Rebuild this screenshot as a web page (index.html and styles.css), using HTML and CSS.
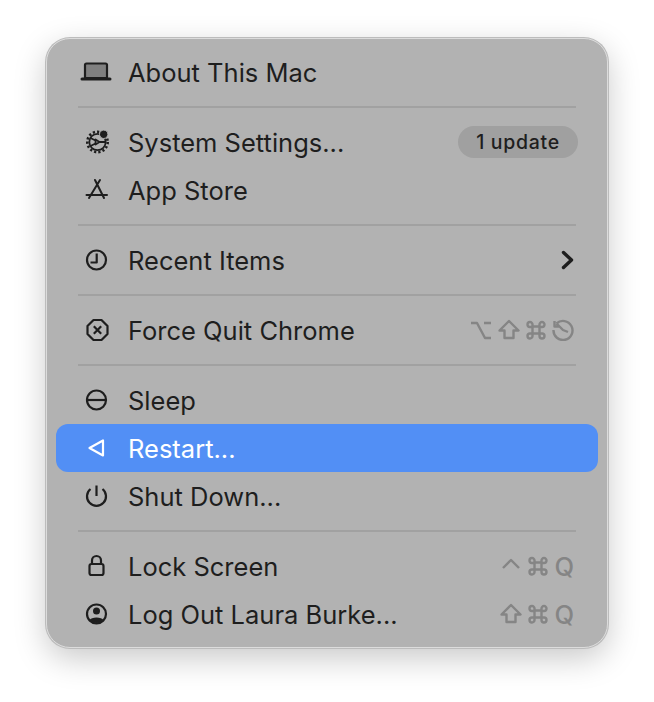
FILE: index.html
```html
<!DOCTYPE html>
<html lang="en">
  <head>
    <meta charset="UTF-8" />
    <title>Apple menu</title>
    <link rel="stylesheet" href="styles.css">
  </head>
  <body>
    <svg class="defs" width="0" height="0" aria-hidden="true">
      <symbol id="key-shift" viewBox="0 0 22 22">
        <path d="M11 2 L20.500 11.500 H15.500 V19 H6.500 V11.500 H1.500 Z" />
      </symbol>
      <symbol id="key-cmd" viewBox="0 0 20 20">
        <path d="M6.500 6.500 H13.500 V13.500 H6.500 Z M6.500 6.500 V4.500 A2.500 2.500 0 1 0 4 7 H6.500 M13.500 6.500 V4.500 A2.500 2.500 0 1 1 16 7 H13.500 M6.500 13.500 V16 A2.500 2.500 0 1 1 4 13.500 H6.500 M13.500 13.500 V16 A2.500 2.500 0 1 0 16 13.500 H13.500" />
      </symbol>
    </svg>

    <div class="menu">
      <div class="item">
        <svg class="icon" viewBox="0 0 32 32">
          <path class="laptop-lid" d="M5 22 V9 A1.500 1.500 0 0 1 6.500 7.500 H25.500 A1.500 1.500 0 0 1 27 9 V22 Z" />
          <path class="laptop-base" d="M2 23 H30" />
        </svg>
        <span class="label">About This Mac</span>
      </div>
      <hr class="sep" />

      <div class="item">
        <svg class="icon" viewBox="0 0 32 32">
          <circle class="gear-teeth" cx="17.500" cy="16" r="10.200" />
          <circle class="thin" cx="17.500" cy="16" r="8.200" />
          <path class="thin" d="M10.500 12 L15.500 14.500 M10.500 20 L15.500 17.500 M19.500 16 H25.500 M15.500 13.500 L19.500 16 L15.500 18.500 Z" />
          <circle class="gear-dot" cx="23.700" cy="8.300" r="4.200" />
        </svg>
        <span class="label">System Settings...</span>
        <span class="badge">1 update</span>
      </div>
      <div class="item">
        <svg class="icon" viewBox="0 0 32 32">
          <path class="appstore" d="M15 6 L24 24 M20 6 L9 24 M6.500 21 H27" />
        </svg>
        <span class="label">App Store</span>
      </div>
      <hr class="sep" />

      <div class="item">
        <svg class="icon" viewBox="0 0 32 32">
          <circle cx="16.500" cy="16" r="9.500" />
          <path d="M16.700 9.500 V18.500 H10.500" />
        </svg>
        <span class="label">Recent Items</span>
        <svg class="chevron" viewBox="0 0 14 20">
          <path d="M2.500 2.500 L10.500 10 L2.500 17.500" />
        </svg>
      </div>
      <hr class="sep" />

      <div class="item">
        <svg class="icon" viewBox="0 0 32 32">
          <path d="M13.500 6 H21.500 L27.500 12 V20 L21.500 26 H13.500 L7.500 20 V12 Z" />
          <path d="M13.800 12.300 L21.200 19.700 M21.200 12.300 L13.800 19.700" />
        </svg>
        <span class="label">Force Quit Chrome</span>
        <span class="keys">
          <svg class="key" viewBox="0 0 22 22"><path d="M1 4 H7 L15 19 H21 M14 4 H21" /></svg>
          <svg class="key"><use href="#key-shift" /></svg>
          <svg class="key key-cmd"><use href="#key-cmd" /></svg>
          <svg class="key" viewBox="0 0 22 22"><path d="M4.500 4.500 A9.500 9.500 0 1 1 1.500 11 M2.500 2 V7.500 H8 M4.500 4.500 L11 11 L16 13" /></svg>
        </span>
      </div>
      <hr class="sep" />

      <div class="item">
        <svg class="icon" viewBox="0 0 32 32">
          <circle cx="16.500" cy="16" r="9.500" />
          <path d="M7 16 H26" />
        </svg>
        <span class="label">Sleep</span>
      </div>
      <div class="item selected">
        <svg class="icon" viewBox="0 0 32 32">
          <path d="M9.500 16 L23 8.500 V23.500 Z" />
        </svg>
        <span class="label">Restart...</span>
      </div>
      <div class="item">
        <svg class="icon" viewBox="0 0 32 32">
          <path d="M10.500 9 A9.500 9.500 0 1 0 22.500 9 M16.500 5.500 V16" />
        </svg>
        <span class="label">Shut Down...</span>
      </div>
      <hr class="sep" />

      <div class="item">
        <svg class="icon" viewBox="0 0 32 32">
          <rect x="9.500" y="14" width="14" height="11" rx="2" />
          <path d="M12 14 V10.500 A4.500 4.500 0 0 1 21 10.500 V14" />
        </svg>
        <span class="label">Lock Screen</span>
        <span class="keys">
          <svg class="key" viewBox="0 0 22 22"><path d="M3 13 L11 5 L19 13" /></svg>
          <svg class="key key-cmd"><use href="#key-cmd" /></svg>
          <span class="key-q">Q</span>
        </span>
      </div>
      <div class="item">
        <svg class="icon" viewBox="0 0 32 32">
          <circle cx="16.500" cy="16" r="9.500" />
          <circle class="solid" cx="16.500" cy="13" r="3.500" />
          <path class="solid" d="M9.500 22 C11 18.500 22 18.500 23.500 22 C21 26 12 26 9.500 22 Z" />
        </svg>
        <span class="label">Log Out Laura Burke...</span>
        <span class="keys">
          <svg class="key"><use href="#key-shift" /></svg>
          <svg class="key key-cmd"><use href="#key-cmd" /></svg>
          <span class="key-q">Q</span>
        </span>
      </div>
    </div>
  </body>
</html>
```

FILE: styles.css
```css
:root {
  --panel-color: #b2b2b2;
  --text-color: #1e1e1e;
  --muted-color: #858585;
  --sep-color: #a1a1a1;
  --select-color: #528ff5;
  --font-family: Inter, "Liberation Sans", sans-serif;
}
* {
  box-sizing: border-box;
}
body {
  margin: 0;
  min-height: 100vh;
  padding: 38px 0 0 46px;
  background-color: #fff;
  font-family: var(--font-family);
  color: var(--text-color);
}
.defs {
  display: block;
  height: 0;
}
.menu {
  width: 562px;
  padding: 9px;
  background-color: var(--panel-color);
  border: 1px solid #dcdcdc;
  border-radius: 24px;
  box-shadow: 0 0 0 1px #bcbcbc, 0 10px 32px rgba(0, 0, 0, 0.22);
}
.sep {
  height: 2px;
  margin: 10px 22px;
  border: 0;
  background-color: var(--sep-color);
}
.item {
  display: flex;
  align-items: center;
  height: 48px;
  padding: 0 20px 0 24px;
  border-radius: 12px;
  font-size: 25.5px;
}
.item.selected {
  background-color: var(--select-color);
  color: #fff;
}
.icon {
  width: 32px;
  height: 32px;
  margin-right: 16px;
  flex-shrink: 0;
  fill: none;
  stroke: currentColor;
  stroke-width: 2.2;
  stroke-linejoin: round;
}
.laptop-lid {
  fill: #808080;
}
.laptop-base {
  stroke-width: 3;
  stroke-linecap: round;
}
.appstore {
  stroke-width: 2;
  stroke-linecap: round;
}
.gear-teeth {
  stroke-width: 2.600;
  stroke-dasharray: 2.200 2.100;
}
.thin {
  stroke-width: 1.800;
}
.gear-dot,
.solid {
  fill: currentColor;
  stroke: none;
}
.gear-dot {
  stroke: var(--panel-color);
  stroke-width: 1;
}
.label {
  white-space: nowrap;
}
.badge {
  margin-left: auto;
  width: 120px;
  height: 32px;
  line-height: 32px;
  border-radius: 16px;
  background-color: #a0a0a0;
  font-size: 19.5px;
  font-weight: 500;
  letter-spacing: 0.7px;
  text-align: center;
}
.chevron {
  margin-left: auto;
  margin-right: 3px;
  width: 14px;
  height: 20px;
  fill: none;
  stroke: currentColor;
  stroke-width: 3.400;
  stroke-linecap: round;
  stroke-linejoin: round;
}
.keys {
  display: flex;
  align-items: center;
  gap: 6px;
  margin-left: auto;
  margin-right: 4px;
  color: var(--muted-color);
}
.key {
  width: 22px;
  height: 22px;
  fill: none;
  stroke: currentColor;
  stroke-width: 2.400;
  stroke-linejoin: round;
}
.key-cmd {
  width: 20px;
  height: 20px;
}
.key-q {
  width: 20px;
  font-size: 25.5px;
  font-weight: 500;
  text-align: right;
}
```
